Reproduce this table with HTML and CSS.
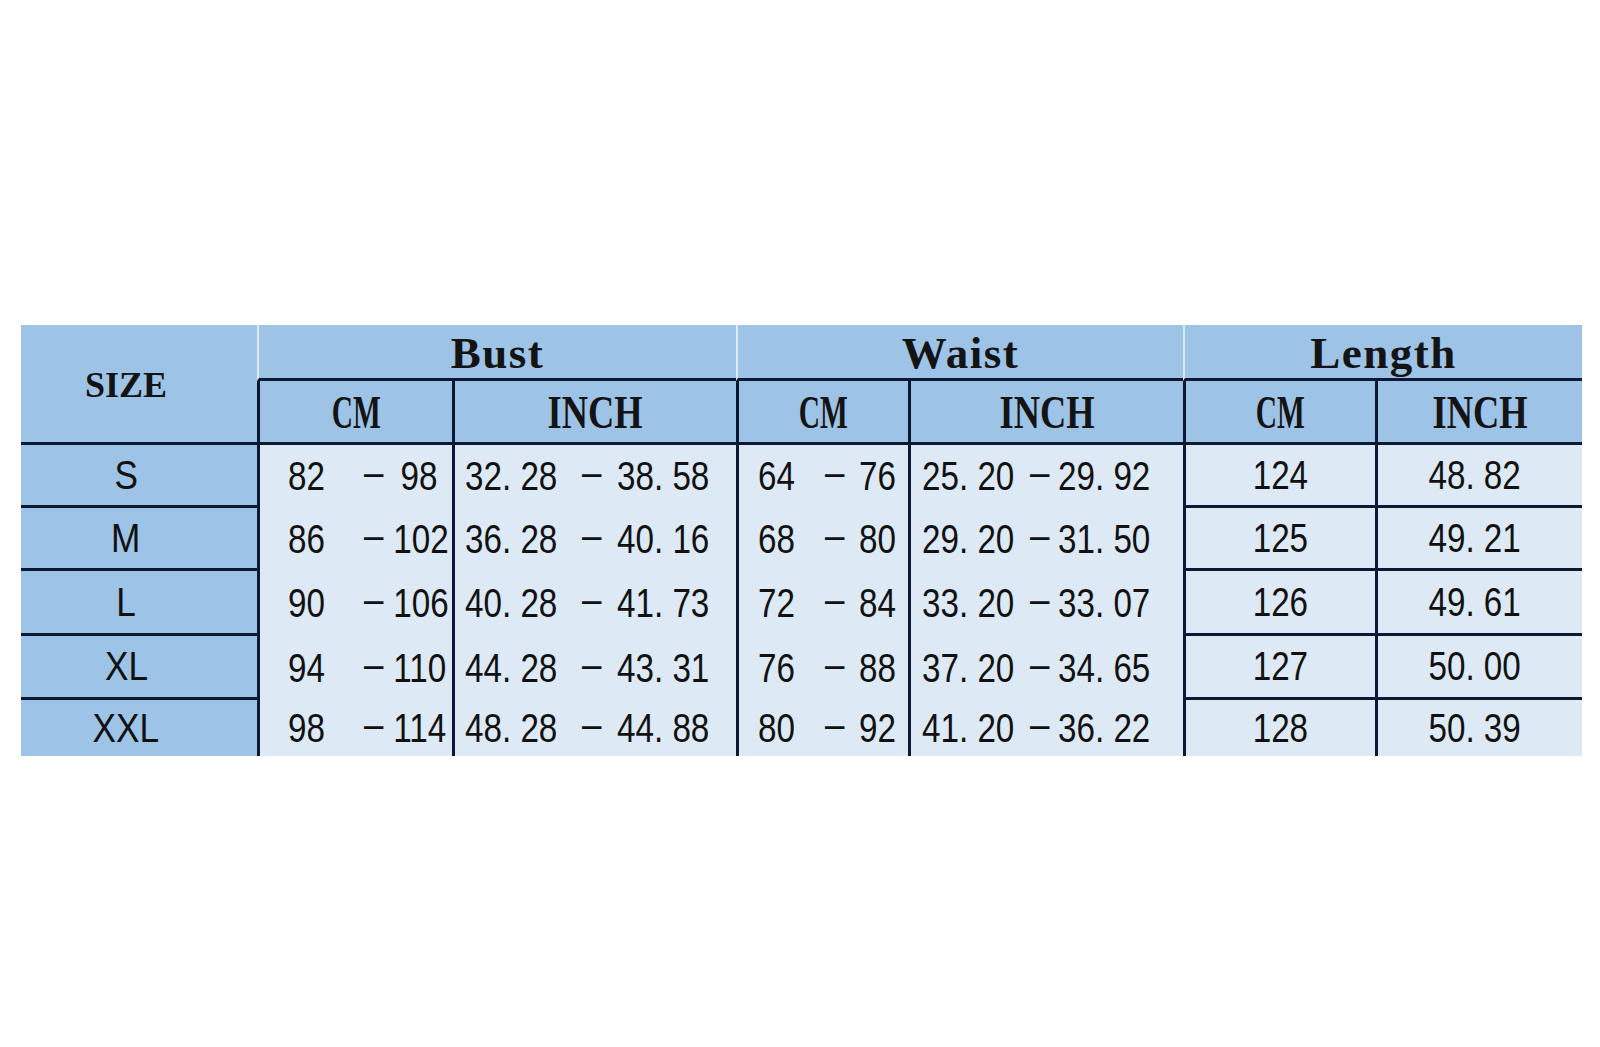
FILE: index.html
```html
<!DOCTYPE html>
<html lang="en">
<head>
<meta charset="utf-8">
<title>Size Chart</title>
<link rel="stylesheet" href="styles.css">
</head>
<body>
<div class="sheet">
  <div class="hd size-hd"><span>SIZE</span></div>
  <div class="hd grp">Bust</div>
  <div class="hd grp">Waist</div>
  <div class="hd grp">Length</div>

  <div class="hd sub"><span class="cm">CM</span></div>
  <div class="hd sub"><span class="inch">INCH</span></div>
  <div class="hd sub"><span class="cm">CM</span></div>
  <div class="hd sub"><span class="inch">INCH</span></div>
  <div class="hd sub"><span class="cm">CM</span></div>
  <div class="hd sub"><span class="inch">INCH</span></div>

  <div class="row">
    <div class="sz"><span class="n">S</span></div>
    <div class="d bc"><span class="a">82</span><span class="m">−</span><span class="b">98</span></div>
    <div class="d bi"><span class="a">32. 28</span><span class="m">−</span><span class="b">38. 58</span></div>
    <div class="d wc"><span class="a">64</span><span class="m">−</span><span class="b">76</span></div>
    <div class="d wi"><span class="a">25. 20</span><span class="m">−</span><span class="b">29. 92</span></div>
    <div class="d ln lc"><span class="n">124</span></div>
    <div class="d ln li"><span class="n">48. 82</span></div>
  </div>
  <div class="row">
    <div class="sz"><span class="n">M</span></div>
    <div class="d bc"><span class="a">86</span><span class="m">−</span><span class="b">102</span></div>
    <div class="d bi"><span class="a">36. 28</span><span class="m">−</span><span class="b">40. 16</span></div>
    <div class="d wc"><span class="a">68</span><span class="m">−</span><span class="b">80</span></div>
    <div class="d wi"><span class="a">29. 20</span><span class="m">−</span><span class="b">31. 50</span></div>
    <div class="d ln lc"><span class="n">125</span></div>
    <div class="d ln li"><span class="n">49. 21</span></div>
  </div>
  <div class="row">
    <div class="sz"><span class="n">L</span></div>
    <div class="d bc"><span class="a">90</span><span class="m">−</span><span class="b">106</span></div>
    <div class="d bi"><span class="a">40. 28</span><span class="m">−</span><span class="b">41. 73</span></div>
    <div class="d wc"><span class="a">72</span><span class="m">−</span><span class="b">84</span></div>
    <div class="d wi"><span class="a">33. 20</span><span class="m">−</span><span class="b">33. 07</span></div>
    <div class="d ln lc"><span class="n">126</span></div>
    <div class="d ln li"><span class="n">49. 61</span></div>
  </div>
  <div class="row">
    <div class="sz"><span class="n">XL</span></div>
    <div class="d bc"><span class="a">94</span><span class="m">−</span><span class="b">110</span></div>
    <div class="d bi"><span class="a">44. 28</span><span class="m">−</span><span class="b">43. 31</span></div>
    <div class="d wc"><span class="a">76</span><span class="m">−</span><span class="b">88</span></div>
    <div class="d wi"><span class="a">37. 20</span><span class="m">−</span><span class="b">34. 65</span></div>
    <div class="d ln lc"><span class="n">127</span></div>
    <div class="d ln li"><span class="n">50. 00</span></div>
  </div>
  <div class="row">
    <div class="sz"><span class="n">XXL</span></div>
    <div class="d bc"><span class="a">98</span><span class="m">−</span><span class="b">114</span></div>
    <div class="d bi"><span class="a">48. 28</span><span class="m">−</span><span class="b">44. 88</span></div>
    <div class="d wc"><span class="a">80</span><span class="m">−</span><span class="b">92</span></div>
    <div class="d wi"><span class="a">41. 20</span><span class="m">−</span><span class="b">36. 22</span></div>
    <div class="d ln lc"><span class="n">128</span></div>
    <div class="d ln li"><span class="n">50. 39</span></div>
  </div>
</div>
</body>
</html>
```
FILE: styles.css
```css
html, body {
  margin: 0;
  padding: 0;
  background: #ffffff;
}

body {
  font-family: "Liberation Sans", Arial, sans-serif;
  color: #111111;
}

.sheet {
  display: grid;
  grid-template-columns: 236px 195px 284px 172px 275px 192px 207px;
  grid-template-rows: 56px 64px 63px 63px 65px 64px 56px;
  margin: 325px 0 0 21px;
  width: 1561px;
}

.row {
  display: contents;
}

/* header cells */
.hd {
  background: #9dc3e7;
  display: flex;
  align-items: center;
  justify-content: center;
  box-sizing: border-box;
  font-family: "Liberation Serif", "Times New Roman", serif;
  font-weight: bold;
  color: #141414;
}

.size-hd {
  grid-row: 1 / span 2;
  border-bottom: 3px solid #0d1832;
  font-size: 36px;
  padding-right: 26px;
  padding-top: 3px;
}

.grp {
  grid-column: span 2;
  border-bottom: 3px solid #0d1832;
  border-left: 2px solid #dde8f3;
  font-size: 45px;
  letter-spacing: 1.5px;
  padding-top: 2px;
}

.sub {
  border-bottom: 3px solid #0d1832;
  border-left: 3px solid #0d1832;
  font-size: 46px;
  padding-top: 2px;
}

.cm {
  display: inline-block;
  transform: scaleX(0.64);
}

.inch {
  display: inline-block;
  transform: scaleX(0.79);
}

/* body cells */
.sz {
  background: #9dc3e7;
  box-sizing: border-box;
  border-bottom: 3px solid #0d1832;
  display: flex;
  align-items: center;
  justify-content: center;
  padding-right: 26px;
  font-size: 40px;
}

.sz .n {
  display: inline-block;
  transform: scaleX(0.88);
}

.row:last-child .sz,
.row:last-child .ln {
  border-bottom: none;
}

.d {
  background: #dde9f5;
  box-sizing: border-box;
  border-left: 3px solid #0d1832;
  font-size: 40px;
  display: grid;
  align-items: center;
  white-space: nowrap;
}

.d .a,
.d .b {
  display: inline-block;
  text-align: left;
  transform: scaleX(0.83);
  transform-origin: left center;
}

.d .m {
  display: inline-block;
  text-align: left;
  transform: translateY(-1px);
}

.bc {
  padding-left: 28px;
  grid-template-columns: 74px 26px 62px;
}

.bc .b {
  text-align: center;
  transform-origin: center center;
}

.bi {
  padding-left: 10px;
  grid-template-columns: 115px 37px auto;
}

.wc {
  padding-left: 19px;
  grid-template-columns: 65px 36px auto;
}

.wi {
  padding-left: 11px;
  grid-template-columns: 106px 30px auto;
}

.ln {
  border-bottom: 3px solid #0d1832;
  display: flex;
  justify-content: center;
}

.ln .n {
  display: inline-block;
  transform: scaleX(0.83);
}

.li {
  padding-right: 10px;
}
```
